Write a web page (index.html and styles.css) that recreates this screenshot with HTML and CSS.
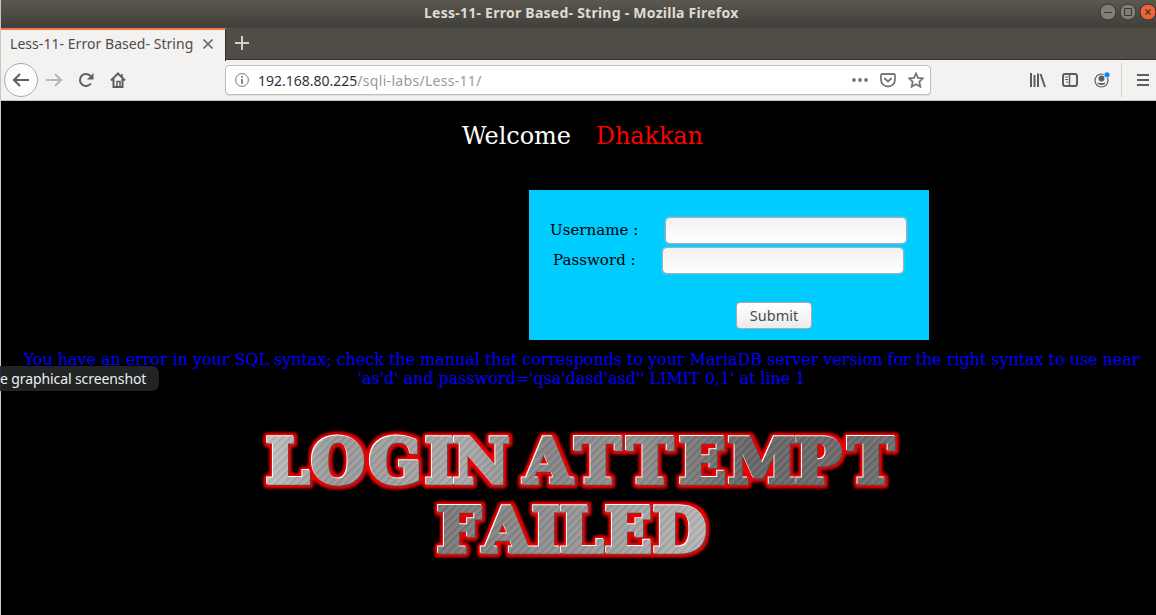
FILE: index.html
```html
<!DOCTYPE html>
<html lang="en">
<head>
<meta charset="utf-8">
<title>Less-11- Error Based- String</title>
<link rel="stylesheet" href="styles.css">
</head>
<body>
<div class="window">
  <header class="titlebar">
    <span class="window-title">Less-11- Error Based- String - Mozilla Firefox</span>
    <div class="controls">
      <svg width="18" height="18" viewBox="0 0 18 18"><circle cx="9" cy="9" r="8" fill="#807e76" stroke="#35342f"/><path d="M5 9.500h8" stroke="#393833"/></svg>
      <svg width="18" height="18" viewBox="0 0 18 18"><circle cx="9" cy="9" r="8" fill="#807e76" stroke="#35342f"/><path d="M5.500 5.500h7v7h-7z" fill="none" stroke="#393833"/></svg>
      <svg width="18" height="18" viewBox="0 0 18 18"><circle cx="9" cy="9" r="8" fill="#ef6336" stroke="#35342f"/><path d="M6.500 6.500l5 5m0-5l-5 5" stroke="#443328" stroke-width="1.300"/></svg>
    </div>
  </header>
  <div class="tabs">
    <div class="tab"><span class="tab-title">Less-11- Error Based- String</span>
      <svg class="tab-close" width="12" height="12" viewBox="0 0 12 12"><path d="M1.500 1.500l9 9m0-9l-9 9" stroke="#666" stroke-width="1.700"/></svg>
    </div>
    <svg class="newtab" width="16" height="16" viewBox="0 0 16 16"><path d="M8 1v14M1 8h14" stroke="#d2d0cb" stroke-width="2"/></svg>
  </div>
  <nav class="toolbar">
    <div class="nav-buttons">
      <span class="back"><svg width="18" height="18" viewBox="0 0 18 18"><path d="M17 9H2M8 3L2 9l6 6" class="ico"/></svg></span>
      <svg class="forward" width="18" height="18" viewBox="0 0 18 18"><path d="M1 9h15M10 3l6 6-6 6" class="ico"/></svg>
      <svg class="reload" width="16" height="16" viewBox="0 0 16 16"><path d="M12.800 11.500A6 6 0 1 1 12.500 4" class="ico"/><path d="M15.500 1v6.500H9z" fill="#5e5e5e"/></svg>
      <svg class="home" width="16" height="16" viewBox="0 0 16 16"><path d="M1 8.500L8 1.500l7 7M3.500 7v8h9V7" class="ico"/><path d="M7 15V9.500h3V15M12 2v3" class="ico thin"/></svg>
    </div>
    <div class="urlbar">
      <svg class="info" width="14" height="14" viewBox="0 0 14 14"><circle cx="7" cy="7" r="6.400" fill="none" stroke="#777"/><path d="M7 3v1.800M7 6v5" stroke="#777" stroke-width="1.800"/></svg>
      <div class="url"><span class="host">192.168.80.225</span><span class="path">/sqli-labs/Less-11/</span></div>
      <div class="page-actions">
        <svg width="16" height="16" viewBox="0 0 16 16" fill="#777"><circle cx="2" cy="8" r="1.900"/><circle cx="8" cy="8" r="1.900"/><circle cx="14" cy="8" r="1.900"/></svg>
        <svg width="16" height="16" viewBox="0 0 16 16"><path d="M2.500 2h11q1.500 0 1.500 1.500V8A7 6.500 0 0 1 1 8V3.500Q1 2 2.500 2z" class="ico grey"/><path d="M4.800 6.500L8 9.500l3.200-3" class="ico grey round"/></svg>
        <svg width="16" height="16" viewBox="0 0 16 16"><path d="M8 1.500l2 4.400 4.800.5-3.500 3.300 1 4.900L8 12.200l-4.300 2.400 1-4.900L1.200 6.400 6 5.900z" class="ico grey"/></svg>
      </div>
    </div>
    <div class="tools">
      <svg width="16" height="16" viewBox="0 0 16 16"><path d="M1 1v14M4.500 3v12M8 1.500V15M10.500 2l4.500 13" class="ico"/></svg>
      <svg width="16" height="16" viewBox="0 0 16 16"><rect x="1" y="2" width="14" height="12" rx="2" class="ico"/><path d="M7.500 2v12" class="ico thin"/><path d="M3 5h3M3 7.500h3M4 10h2" stroke="#5e5e5e"/></svg>
      <svg width="16" height="16" viewBox="0 0 16 16"><circle cx="7.500" cy="8.500" r="6.500" fill="none" stroke="#5e5e5e" stroke-width="1.200"/><circle cx="7.500" cy="6.500" r="3" fill="#5e5e5e"/><path d="M3 10.500q4.500 1 9 0a5 4.500 0 0 1-9 0z" fill="#5e5e5e"/><circle cx="13" cy="2.800" r="3.300" fill="#f3f2f1"/><circle cx="13" cy="2.800" r="2.600" fill="#0a84ff"/></svg>
      <span class="separator"></span>
      <svg width="14" height="14" viewBox="0 0 14 14"><path d="M1 2h12M1 7h12M1 12h12" class="ico"/></svg>
    </div>
  </nav>
  <main class="page">
    <h1 class="welcome"><span>Welcome</span><span class="name">Dhakkan</span></h1>
    <form class="login">
      <label class="row user"><span>Username :</span><input type="text"></label>
      <label class="row pass"><span>Password :</span><input type="text"></label>
      <button class="submit" type="button">Submit</button>
    </form>
    <p class="error">You have an error in your SQL syntax; check the manual that corresponds to your MariaDB server version for the right syntax to use near<br>'as'd' and password='qsa'dasd'asd'' LIMIT 0,1' at line 1</p>
    <svg class="banner" width="660" height="150" viewBox="250 420 660 150">
      <defs>
        <linearGradient id="steelTop" gradientUnits="userSpaceOnUse" x1="260" y1="430" x2="900" y2="470">
          <stop offset="0" stop-color="#c6c6c6"/><stop offset=".12" stop-color="#999"/><stop offset=".32" stop-color="#aaa"/><stop offset=".45" stop-color="#858585"/><stop offset=".58" stop-color="#929292"/><stop offset=".76" stop-color="#686868"/><stop offset="1" stop-color="#707070"/>
        </linearGradient>
        <linearGradient id="steelBottom" gradientUnits="userSpaceOnUse" x1="430" y1="520" x2="710" y2="540">
          <stop offset="0" stop-color="#777"/><stop offset=".45" stop-color="#929292"/><stop offset="1" stop-color="#b8b8b8"/>
        </linearGradient>
        <pattern id="scratches" width="11" height="11" patternUnits="userSpaceOnUse" patternTransform="rotate(45)">
          <path d="M1 0v11M6.200 0v11" stroke="#fff" stroke-opacity=".13"/><path d="M3 0v11M8.500 0v11" stroke="#000" stroke-opacity=".12"/>
        </pattern>
        <pattern id="metal" x="250" y="420" width="660" height="150" patternUnits="userSpaceOnUse">
          <g transform="translate(-250 -420)"><rect x="250" y="420" width="660" height="75" fill="url(#steelTop)"/><rect x="250" y="495" width="660" height="75" fill="url(#steelBottom)"/><rect x="250" y="420" width="660" height="150" fill="url(#scratches)"/></g>
        </pattern>
        <filter id="glow" filterUnits="userSpaceOnUse" x="250" y="420" width="660" height="150" color-interpolation-filters="sRGB">
          <feMorphology in="SourceAlpha" operator="dilate" radius="2" result="wide"/>
          <feGaussianBlur in="wide" stdDeviation="1.800" result="soft"/>
          <feComponentTransfer in="soft" result="halo"><feFuncA type="linear" slope="4" intercept="-.1"/></feComponentTransfer>
          <feFlood flood-color="#ee0000"/><feComposite in2="halo" operator="in" result="red"/>
          <feGaussianBlur in="red" stdDeviation="1" result="redsoft"/>
          <feOffset in="SourceAlpha" dx="-.7" dy="-.7" result="up"/><feFlood flood-color="#fff"/><feComposite in2="up" operator="in" result="light"/>
          <feOffset in="SourceAlpha" dx="1" dy="1" result="down"/><feFlood flood-color="#703535"/><feComposite in2="down" operator="in" result="dark"/>
          <feMerge><feMergeNode in="redsoft"/><feMergeNode in="dark"/><feMergeNode in="light"/><feMergeNode in="SourceGraphic"/></feMerge>
        </filter>
      </defs>
      <g class="banner-text" filter="url(#glow)">
        <text y="482.500" x="266 311 369 425 453">LOGIN</text>
        <text y="482.500" x="524 575 627 679 728 795 848">ATTEMPT</text>
        <text y="551.500" x="437 483 532 560 605 653">FAILED</text>
      </g>
    </svg>
  </main>
  <div class="tooltip">e graphical screenshot</div>
</div>
</body>
</html>
```
FILE: styles.css
```css
* { box-sizing: border-box; }
body { margin: 0; background: #000; overflow: hidden; font-family: "Noto Sans", sans-serif; }
svg { display: block; flex: none; }
.window { position: relative; width: 1156px; height: 615px; border-left: 1px solid #c9c6c2; }
.titlebar { height: 27px; display: flex; align-items: center; background: linear-gradient(#5a584f, #403f3a); color: #dfdbd2; }
.window-title { width: 320px; margin: -3px 0 0 423px; white-space: nowrap; font: bold 14px "Noto Sans", sans-serif; letter-spacing: .25px; }
.controls { display: flex; gap: 2px; margin: -3px -1px 0 auto; }
.tabs { height: 33px; display: flex; background: #504d46; border-top: 1px solid #45433d; border-bottom: 1px solid #33322e; }
.tab { width: 225px; height: 33px; margin-bottom: -1px; display: flex; align-items: center; background: #f3f2f1; border-top: 2px solid #f07746; border-right: 1px solid #33322e; padding: 0 11px 4px 9px; color: #4c4c4c; }
.tab-title { width: 186px; font-size: 14px; letter-spacing: .05px; white-space: nowrap; }
.tab-close { margin-left: 6px; }
.newtab { margin: 7px 0 0 8px; }
.toolbar { height: 41px; display: flex; align-items: center; background: #f3f2f1; border-bottom: 1px solid #c8c4bf; }
.nav-buttons { width: 224px; display: flex; align-items: center; padding-left: 3px; }
.back { width: 34px; height: 34px; border: 1px solid #aaa; border-radius: 50%; background: #fcfcfc; display: flex; align-items: center; justify-content: center; }
.ico { fill: none; stroke: #5e5e5e; stroke-width: 2; }
.thin { stroke-width: 1.5; }
.grey { stroke: #777; stroke-width: 1.8; }
.round { stroke-linecap: round; }
.forward { margin-left: 7px; opacity: .4; }
.reload { margin-left: 15px; }
.home { margin-left: 16px; }
.urlbar { width: 706px; height: 30px; display: flex; align-items: center; border: 1px solid #c1beba; border-radius: 4px; background: #fff; padding: 0 6px 0 9px; box-shadow: 0 1px 1px #ddd; }
.url { margin-left: 9px; font-size: 14px; color: #333; white-space: nowrap; }
.path { color: #999; letter-spacing: .3px; }
.page-actions { margin-left: auto; display: flex; gap: 12px; }
.tools { display: flex; align-items: center; gap: 16px; margin-left: 99px; }
.separator { width: 1px; height: 34px; background: #d4d2cf; margin: 0 -2px 0 -5px; }
.page { height: 514px; background: #000; font-family: "DejaVu Serif", serif; }
.welcome { margin: 0; padding: 21px 0 0 461px; height: 89px; display: flex; gap: 25px; color: #fff; font-size: 24px; font-weight: normal; line-height: 28px; letter-spacing: -.1px; }
.name { color: #f00; }
.login { width: 400px; height: 150px; margin-left: 528px; padding-top: 26px; background: #0cf; }
.row { display: flex; align-items: center; height: 28px; font-size: 15px; letter-spacing: .05px; }
.row input { width: 242px; height: 27px; border: 1px solid #aaa; border-radius: 5px; background: linear-gradient(#f1f1f1, #fff); box-shadow: 0 0 1px #fff; padding: 0; }
.user { padding-left: 21px; }
.user span { width: 115px; }
.pass { margin-top: 2px; padding-left: 24px; }
.pass span { width: 109px; }
.submit { display: block; width: 76px; height: 27px; margin: 28px 0 0 207px; border: 1px solid #aaa; border-radius: 4px; background: linear-gradient(#fff, #ebebeb); color: #4c4c4c; font: 14.500px "Noto Sans", sans-serif; padding: 0 0 2px; }
.error { margin: 10px 0 0 6px; color: #00f; text-align: center; font-size: 16px; line-height: 19px; letter-spacing: -.045px; white-space: nowrap; }
.banner { margin: 32px 0 0 249px; }
.banner-text { font: bold 62px "DejaVu Serif", serif; fill: url(#metal); stroke: url(#metal); stroke-width: 3.5px; }
.tooltip { position: absolute; left: -1px; top: 366px; width: 159px; height: 25px; border-radius: 0 7px 7px 0; background: rgba(35, 38, 39, .95); color: #eee; font-size: 14px; line-height: 25px; letter-spacing: -.1px; white-space: nowrap; }
```
